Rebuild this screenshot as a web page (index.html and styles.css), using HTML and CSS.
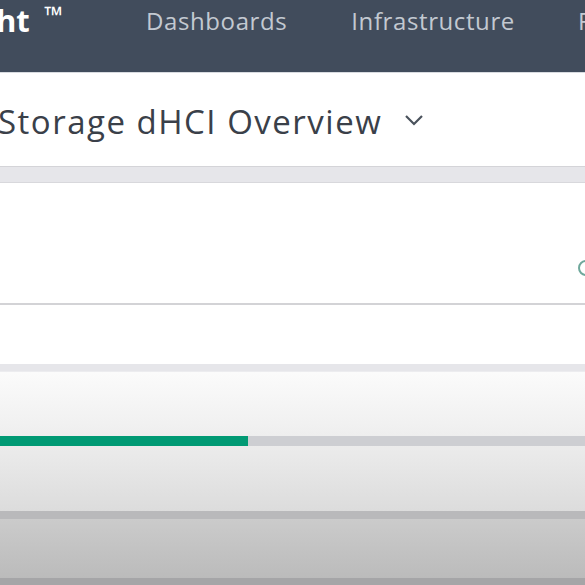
FILE: index.html
```html
<!DOCTYPE html>
<html lang="en">
<head>
    <meta charset="UTF-8">
    <meta name="viewport" content="width=device-width, initial-scale=1.0">
    <title>Storage dHCI Overview</title>
    <link rel="stylesheet" href="styles.css">
</head>
<body>
    <header class="topbar">
        <div class="brand">ht <span class="tm">™</span></div>
        <nav class="nav">
            <a class="nav-item dash">Dashboards</a>
            <a class="nav-item infra">Infrastructure</a>
            <a class="nav-item more">F</a>
        </nav>
    </header>

    <div class="title-row">
        <h1>Storage dHCI Overview</h1>
        <svg class="chevron" width="20" height="12" viewBox="0 0 20 12">
            <path d="M2 2 L10 10 L18 2" fill="none" stroke="#4a525c" stroke-width="2.2"/>
        </svg>
    </div>

    <div class="band"></div>

    <section class="panel">
        <span class="status-dot"></span>
    </section>

    <section class="panel-low"></section>
    <div class="band thin"></div>

    <section class="capacity">
        <div class="bar">
            <div class="bar-fill" style="width: 248px"></div>
        </div>
    </section>
    <div class="sep"></div>
    <section class="lower"></section>
    <div class="sep dark"></div>
</body>
</html>
```

FILE: styles.css
```css
body {
    margin: 0;
    font-family: "Open Sans", "Liberation Sans", sans-serif;
    background: #fff;
    overflow: hidden;
    width: 585px;
    height: 585px;
}
.topbar {
    height: 72px;
    background: #414c5c;
    display: flex;
    align-items: flex-start;
    box-shadow: 0 1px 0 #d8dbe0;
}
.brand {
    color: #fff;
    font-weight: bold;
    font-size: 31px;
    line-height: 36px;
    margin-left: -4px;
    width: 150px;
    flex: none;
    margin-top: -3px;
    white-space: nowrap;
}
.tm {
    font-size: 24px;
    vertical-align: 8px;
    margin-left: 6px;
}
.nav {
    display: flex;
    margin-top: 5px;
    white-space: nowrap;
}
.nav-item {
    color: #c3c9d1;
    font-size: 24px;
    line-height: 32px;
    letter-spacing: 0.6px;
}
.dash {
    margin-right: 64px;
}
.infra {
    margin-right: 63px;
}
.title-row {
    height: 94px;
    display: flex;
    align-items: center;
}
h1 {
    margin: 0 0 0 -2px;
    font-weight: normal;
    font-size: 33px;
    color: #3a4049;
    letter-spacing: 1.5px;
    padding-top: 4px;
}
.chevron {
    margin-left: 22px;
    margin-top: 2px;
}
.band {
    height: 15px;
    background: #e6e6ea;
    border-top: 1px solid #d4d4d8;
    border-bottom: 1px solid #d8d8dc;
}
.panel {
    height: 120px;
    position: relative;
    border-bottom: 2px solid #d3d3d6;
}
.status-dot {
    position: absolute;
    left: 578px;
    top: 77px;
    width: 12px;
    height: 12px;
    border: 2px solid #6fa89c;
    border-radius: 50%;
}
.panel-low {
    height: 59px;
}
.band.thin {
    height: 7px;
    border-top: none;
    border-bottom: 1px solid #ececef;
}
.capacity {
    height: 139px;
    background: linear-gradient(#fbfbfb, #f0f0f0 40%, #dcdcdc);
    display: flex;
    flex-direction: column;
    padding-top: 64px;
    box-sizing: border-box;
}
.bar {
    height: 10px;
    background: #cdced2;
    display: flex;
}
.bar-fill {
    background: #019a74;
}
.sep {
    height: 8px;
    background: #b9b9bb;
}
.lower {
    height: 59px;
    background: linear-gradient(#cbcbcb, #bbbbbb);
}
.sep.dark {
    background: #a5a5a7;
}
```
